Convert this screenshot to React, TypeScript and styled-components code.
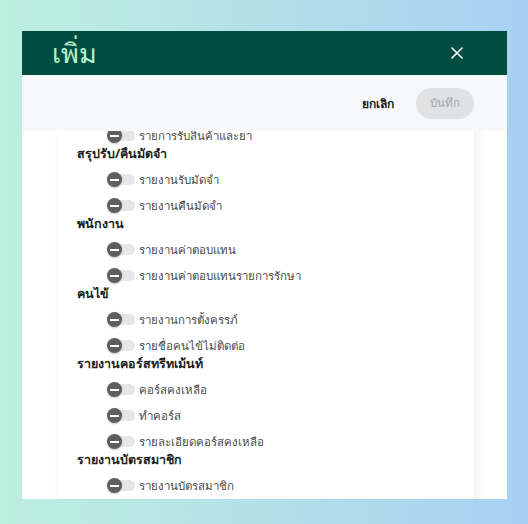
import { useLayoutEffect, useRef } from "react";
import styled, { createGlobalStyle } from "styled-components";

const GlobalStyle = createGlobalStyle`
  html, body {
    margin: 0;
    padding: 0;
  }
  body {
    font-family: "Noto Sans", "Liberation Sans", sans-serif;
  }
`;

interface Group {
  title: string;
  items: string[];
}

const groups: Group[] = [
  { title: "รายงานสินค้า", items: ["รายงานสินค้าคงเหลือ", "รายการรับสินค้าและยา"] },
  { title: "สรุปรับ/คืนมัดจำ", items: ["รายงานรับมัดจำ", "รายงานคืนมัดจำ"] },
  { title: "พนักงาน", items: ["รายงานค่าตอบแทน", "รายงานค่าตอบแทนรายการรักษา"] },
  { title: "คนไข้", items: ["รายงานการตั้งครรภ์", "รายชื่อคนไข้ไม่ติดต่อ"] },
  {
    title: "รายงานคอร์สทรีทเม้นท์",
    items: ["คอร์สคงเหลือ", "ทำคอร์ส", "รายละเอียดคอร์สคงเหลือ"],
  },
  { title: "รายงานบัตรสมาชิก", items: ["รายงานบัตรสมาชิก", "รายงานแต้มสะสม"] },
];

const Page = styled.div`
  box-sizing: border-box;
  width: 100vw;
  height: 100vh;
  padding: 31px 21px 25px 22px;
  background: linear-gradient(90deg, #bdefdf 0%, #b3e0e8 50%, #a7d0f3 100%);
  overflow: hidden;
`;

const Dialog = styled.div`
  display: flex;
  flex-direction: column;
  height: 100%;
  background: #ffffff;
  overflow: hidden;
`;

const Header = styled.div`
  display: flex;
  align-items: center;
  justify-content: space-between;
  height: 44px;
  padding: 0 38px 0 30px;
  background: #014d40;
  flex-shrink: 0;
`;

const Title = styled.h1`
  margin: 0;
  font-size: 27px;
  font-weight: 500;
  line-height: 44px;
  color: #b6f2cc;
`;

const CloseButton = styled.button`
  display: flex;
  align-items: center;
  justify-content: center;
  width: 24px;
  height: 24px;
  padding: 0;
  border: none;
  background: none;
  cursor: pointer;
`;

const ActionBar = styled.div`
  display: flex;
  align-items: center;
  justify-content: flex-end;
  gap: 22px;
  height: 56px;
  padding: 0 33px 0 0;
  background: #f7f8fb;
  flex-shrink: 0;
`;

const TextButton = styled.button`
  border: none;
  background: none;
  padding: 0;
  font-family: inherit;
  font-size: 12px;
  font-weight: 600;
  color: #1c1c1c;
  cursor: pointer;
`;

const PillButton = styled.button`
  width: 58px;
  height: 31px;
  border: none;
  border-radius: 16px;
  background: #e1e2e4;
  font-family: inherit;
  font-size: 11.5px;
  color: #a3a6ab;
  cursor: default;
`;

const Scroller = styled.div`
  position: relative;
  flex: 1;
  overflow-y: auto;
  padding: 0 33px 0 36px;
  scrollbar-width: none;
  &::-webkit-scrollbar {
    display: none;
  }
`;

const Card = styled.div`
  padding: 12px 0 40px 19px;
  background: #ffffff;
  box-shadow: 3px 0 8px rgba(0, 0, 0, 0.07);
`;

const GroupTitle = styled.div`
  height: 18px;
  line-height: 18px;
  font-size: 12.5px;
  font-weight: 700;
  color: #1e1e1e;
`;

const ItemList = styled.ul`
  list-style: none;
  margin: 0;
  padding: 0 0 0 30px;
`;

const Item = styled.li`
  display: flex;
  align-items: center;
  gap: 4px;
  height: 19px;
  padding-top: 7px;
  font-size: 11.5px;
  color: #4a4a4a;
`;

const Switch = styled.span`
  position: relative;
  display: inline-block;
  width: 28px;
  height: 15px;
  flex-shrink: 0;
`;

const Track = styled.span`
  position: absolute;
  left: 3px;
  right: 0;
  top: 2px;
  height: 11px;
  border-radius: 6px;
  background: #e6e6e6;
`;

const Thumb = styled.span`
  position: absolute;
  left: 0;
  top: 0;
  width: 15px;
  height: 15px;
  border-radius: 50%;
  background: #5e5e5e;
  box-shadow: 0 1px 2px rgba(0, 0, 0, 0.25);

  &::after {
    content: "";
    position: absolute;
    left: 3px;
    right: 3px;
    top: 6.5px;
    height: 2px;
    background: #ffffff;
  }
`;

const Toggle = () => (
  <Switch>
    <Track />
    <Thumb />
  </Switch>
);

export default function App() {
  const scrollRef = useRef<HTMLDivElement>(null);
  const anchorRef = useRef<HTMLDivElement>(null);

  useLayoutEffect(() => {
    if (scrollRef.current && anchorRef.current) {
      scrollRef.current.scrollTop = anchorRef.current.offsetTop - 14;
    }
  }, []);

  return (
    <>
      <GlobalStyle />
      <Page>
        <Dialog>
          <Header>
            <Title>เพิ่ม</Title>
            <CloseButton aria-label="close">
              <svg width="12" height="12" viewBox="0 0 12 12">
                <path d="M1 1L11 11M11 1L1 11" stroke="#ffffff" strokeWidth="1.6" strokeLinecap="round" />
              </svg>
            </CloseButton>
          </Header>
          <ActionBar>
            <TextButton>ยกเลิก</TextButton>
            <PillButton disabled>บันทึก</PillButton>
          </ActionBar>
          <Scroller ref={scrollRef}>
            <Card>
              {groups.map((group, i) => (
                <div key={group.title}>
                  <GroupTitle ref={i === 1 ? anchorRef : undefined}>{group.title}</GroupTitle>
                  <ItemList>
                    {group.items.map((item) => (
                      <Item key={item}>
                        <Toggle />
                        {item}
                      </Item>
                    ))}
                  </ItemList>
                </div>
              ))}
            </Card>
          </Scroller>
        </Dialog>
      </Page>
    </>
  );
}
